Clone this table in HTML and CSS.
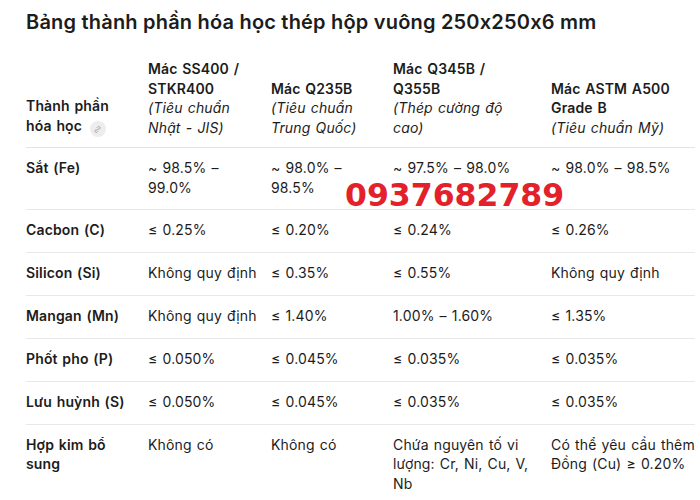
FILE: index.html
```html
<!DOCTYPE html>
<html lang="vi">
<head>
<meta charset="utf-8">
<link rel="stylesheet" href="styles.css">
</head>
<body>
<div class="page">
  <h1 class="title">Bảng thành phần hóa học thép hộp vuông 250x250x6 mm</h1>
  <table class="chem">
    <colgroup>
      <col class="c1"><col class="c2"><col class="c3"><col class="c4"><col class="c5">
    </colgroup>
    <thead>
      <tr>
        <th>Thành phần hóa học <span class="link-ico"><svg viewBox="0 0 16 16" width="9" height="9"><path d="M6.5 9.5l3-3M7.2 4.6l1.2-1.2a2.4 2.4 0 0 1 3.4 3.4l-1.2 1.2M8.8 11.4l-1.2 1.2a2.4 2.4 0 0 1-3.4-3.4l1.2-1.2" fill="none" stroke="#a0a0a0" stroke-width="1.6" stroke-linecap="round"/></svg></span></th>
        <th>Mác SS400 / STKR400 <em>(Tiêu chuẩn Nhật - JIS)</em></th>
        <th>Mác Q235B <em>(Tiêu chuẩn Trung Quốc)</em></th>
        <th>Mác Q345B / Q355B <em>(Thép cường độ cao)</em></th>
        <th>Mác ASTM A500 Grade B <em>(Tiêu chuẩn Mỹ)</em></th>
      </tr>
    </thead>
    <tbody>
      <tr><th>Sắt (Fe)</th><td>~ 98.5% – 99.0%</td><td>~ 98.0% – 98.5%</td><td>~ 97.5% – 98.0%</td><td>~ 98.0% – 98.5%</td></tr>
      <tr><th>Cacbon (C)</th><td>≤ 0.25%</td><td>≤ 0.20%</td><td>≤ 0.24%</td><td>≤ 0.26%</td></tr>
      <tr><th>Silicon (Si)</th><td>Không quy định</td><td>≤ 0.35%</td><td>≤ 0.55%</td><td>Không quy định</td></tr>
      <tr><th>Mangan (Mn)</th><td>Không quy định</td><td>≤ 1.40%</td><td>1.00% – 1.60%</td><td>≤ 1.35%</td></tr>
      <tr><th>Phốt pho (P)</th><td>≤ 0.050%</td><td>≤ 0.045%</td><td>≤ 0.035%</td><td>≤ 0.035%</td></tr>
      <tr><th>Lưu huỳnh (S)</th><td>≤ 0.050%</td><td>≤ 0.045%</td><td>≤ 0.035%</td><td>≤ 0.035%</td></tr>
      <tr><th>Hợp kim bổ sung</th><td>Không có</td><td>Không có</td><td>Chứa nguyên tố vi lượng: Cr, Ni, Cu, V, Nb</td><td>Có thể yêu cầu thêm Đồng (Cu) ≥ 0.20%</td></tr>
    </tbody>
  </table>
  <div class="phone">0937682789</div>
</div>
</body>
</html>
```

FILE: styles.css
```css
html, body {
  margin: 0;
  padding: 0;
  background: #ffffff;
}
body {
  font-family: Inter, "Noto Sans", "DejaVu Sans", sans-serif;
  color: #1c1c1c;
  overflow: hidden;
}
.page {
  position: relative;
  padding: 8px 0 0 26px;
}
.title {
  margin: 0;
  font-size: 20px;
  font-weight: 600;
  line-height: 28px;
  letter-spacing: 0.2px;
  white-space: nowrap;
}
.chem {
  margin-top: 13px;
  border-collapse: collapse;
  table-layout: fixed;
  width: 669px;
  font-size: 14px;
  line-height: 19.5px;
  letter-spacing: 0.15px;
  word-spacing: 1px;
}
.c1 { width: 122px; }
.c2 { width: 123px; }
.c3 { width: 122px; }
.c4 { width: 158px; }
.c5 { width: 144px; }
.chem th, .chem td {
  text-align: left;
  padding: 10px 14px 12.4px 0;
  border-bottom: 1px solid #e8e8e8;
  vertical-align: top;
}
.chem th:nth-child(4), .chem td:nth-child(4) {
  padding-right: 21px;
}
.chem th:nth-child(5), .chem td:nth-child(5) {
  padding-right: 0;
}
.chem thead th {
  vertical-align: bottom;
  font-weight: 600;
  padding-top: 10px;
  padding-bottom: 10px;
  border-bottom: 1px solid #e3e3e3;
}
.chem tbody th {
  font-weight: 600;
}
.chem tbody tr:last-child th, .chem tbody tr:last-child td {
  border-bottom: none;
}
.chem em {
  display: block;
  font-weight: 400;
  font-style: italic;
}
.link-ico {
  display: inline-flex;
  align-items: center;
  justify-content: center;
  width: 16px;
  height: 16px;
  border-radius: 50%;
  background: #ededed;
  vertical-align: -3px;
  margin-left: 3px;
}
.phone {
  position: absolute;
  left: 345px;
  top: 177px;
  font-family: "DejaVu Sans", sans-serif;
  font-weight: 700;
  font-size: 31.5px;
  line-height: 36px;
  color: #e3212b;
}
```
